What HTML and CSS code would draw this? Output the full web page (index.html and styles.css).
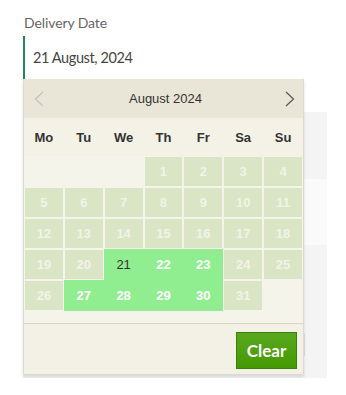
FILE: index.html
```html
<!DOCTYPE html>
<html>
<head>
<meta charset="utf-8">
<link rel="stylesheet" href="styles.css">
</head>
<body>
<div class="field">
  <div class="label">Delivery Date</div>
  <div class="input">21 August, 2024</div>
  <div class="below">
    <div class="band"></div>
    <div class="ghost-btn"></div>
  </div>

  <div class="datepicker">
    <div class="dp-header">
      <span class="nav prev"><svg width="10" height="16" viewBox="0 0 10 16"><polyline points="9,1 1.5,8 9,15" fill="none" stroke="#c2c2c2" stroke-width="1.2"/></svg></span>
      <span class="title">August 2024</span>
      <span class="nav next"><svg width="10" height="16" viewBox="0 0 10 16"><polyline points="1,1 8.5,8 1,15" fill="none" stroke="#555" stroke-width="1.2"/></svg></span>
    </div>
    <table class="dp-table">
      <thead>
        <tr><th>Mo</th><th>Tu</th><th>We</th><th>Th</th><th>Fr</th><th>Sa</th><th>Su</th></tr>
      </thead>
      <tbody>
        <tr><td class="empty"></td><td class="empty"></td><td class="empty"></td><td class="off"><span>1</span></td><td class="off"><span>2</span></td><td class="off"><span>3</span></td><td class="off"><span>4</span></td></tr>
        <tr><td class="off"><span>5</span></td><td class="off"><span>6</span></td><td class="off"><span>7</span></td><td class="off"><span>8</span></td><td class="off"><span>9</span></td><td class="off"><span>10</span></td><td class="off"><span>11</span></td></tr>
        <tr><td class="off"><span>12</span></td><td class="off"><span>13</span></td><td class="off"><span>14</span></td><td class="off"><span>15</span></td><td class="off"><span>16</span></td><td class="off"><span>17</span></td><td class="off"><span>18</span></td></tr>
        <tr><td class="off"><span>19</span></td><td class="off"><span>20</span></td><td class="on sel"><span>21</span></td><td class="on"><span>22</span></td><td class="on"><span>23</span></td><td class="off"><span>24</span></td><td class="off"><span>25</span></td></tr>
        <tr><td class="off"><span>26</span></td><td class="on"><span>27</span></td><td class="on"><span>28</span></td><td class="on"><span>29</span></td><td class="on"><span>30</span></td><td class="off"><span>31</span></td><td class="empty"></td></tr>
      </tbody>
    </table>
    <div class="dp-spacer"></div>
    <div class="dp-buttons">
      <button class="clear">Clear</button>
    </div>
  </div>
</div>
</body>
</html>
```

FILE: styles.css
```css
html, body {
  margin: 0;
  padding: 0;
  background: #fff;
}

.field {
  position: relative;
  padding: 14px 0 0 23px;
}

.label {
  font-family: Lato, "Liberation Sans", sans-serif;
  font-size: 14px;
  line-height: 18px;
  color: #666;
  padding-left: 1px;
  letter-spacing: -0.1px;
}

.input {
  margin-top: 4px;
  height: 43px;
  line-height: 43px;
  border-left: 2px solid #1e8a5a;
  padding-left: 8px;
  font-family: Lato, "Liberation Sans", sans-serif;
  font-size: 14.5px;
  letter-spacing: -0.4px;
  color: #444;
}

.below {
  margin-top: 33px;
  width: 304px;
  height: 266px;
  background: #f4f4f4;
  position: relative;
  display: flex;
  flex-direction: column;
  align-items: flex-end;
}

.band {
  margin-top: 67px;
  width: 100%;
  height: 66px;
  background: #fafafa;
}

.ghost-btn {
  margin-top: 88px;
  margin-right: 22px;
  width: 60px;
  height: 22px;
  background: #fff;
  border: 1px solid #ddd;
  border-radius: 2px;
}

.datepicker {
  position: absolute;
  top: 79px;
  left: 23px;
  width: 279px;
  border: 1px solid #dcdad0;
  border-top: none;
  background: #f5f4ea;
  box-shadow: 0 2px 3px rgba(0, 0, 0, 0.12);
  font-family: "Liberation Sans", Arial, sans-serif;
}

.dp-header {
  height: 39px;
  background: #eae6d7;
  display: flex;
  align-items: center;
  justify-content: space-between;
  padding: 0 8px 0 10px;
}

.nav {
  display: flex;
  width: 10px;
  height: 16px;
}

.title {
  font-size: 13px;
  color: #333;
  padding-left: 2px;
}

.dp-table {
  width: 279px;
  border-collapse: collapse;
  border-spacing: 0;
  table-layout: fixed;
}

.dp-table th {
  height: 38px;
  padding: 0;
  background: #f4f2e6;
  font-size: 13px;
  font-weight: bold;
  color: #333;
  text-align: center;
}

.dp-table td {
  padding: 1px;
  height: 29px;
  text-align: center;
}

.dp-table td span {
  display: flex;
  height: 29px;
  align-items: center;
  justify-content: center;
  font-size: 13px;
  font-weight: bold;
}

.dp-table td.off span {
  background: #d9e5c4;
  color: #f1f3e8;
}

.dp-table td.on {
  background: #90ee90;
}

.dp-table td.on span {
  color: #fff;
}

.dp-table td.sel span {
  color: #333;
  font-weight: normal;
}

.dp-spacer {
  height: 12px;
}

.dp-buttons {
  border-top: 1px solid #d8d4c2;
  background: #f3f1e6;
  height: 51px;
  display: flex;
  justify-content: flex-end;
  align-items: flex-start;
  padding: 8px 6px 0 0;
  box-sizing: border-box;
}

.clear {
  width: 61px;
  height: 37px;
  border: 1px solid #3b7f0d;
  background: linear-gradient(#58a81f, #449a00);
  color: #fff;
  font-family: Lato, "Liberation Sans", sans-serif;
  font-weight: bold;
  font-size: 17px;
  padding: 0;
  border-radius: 0;
}
```
